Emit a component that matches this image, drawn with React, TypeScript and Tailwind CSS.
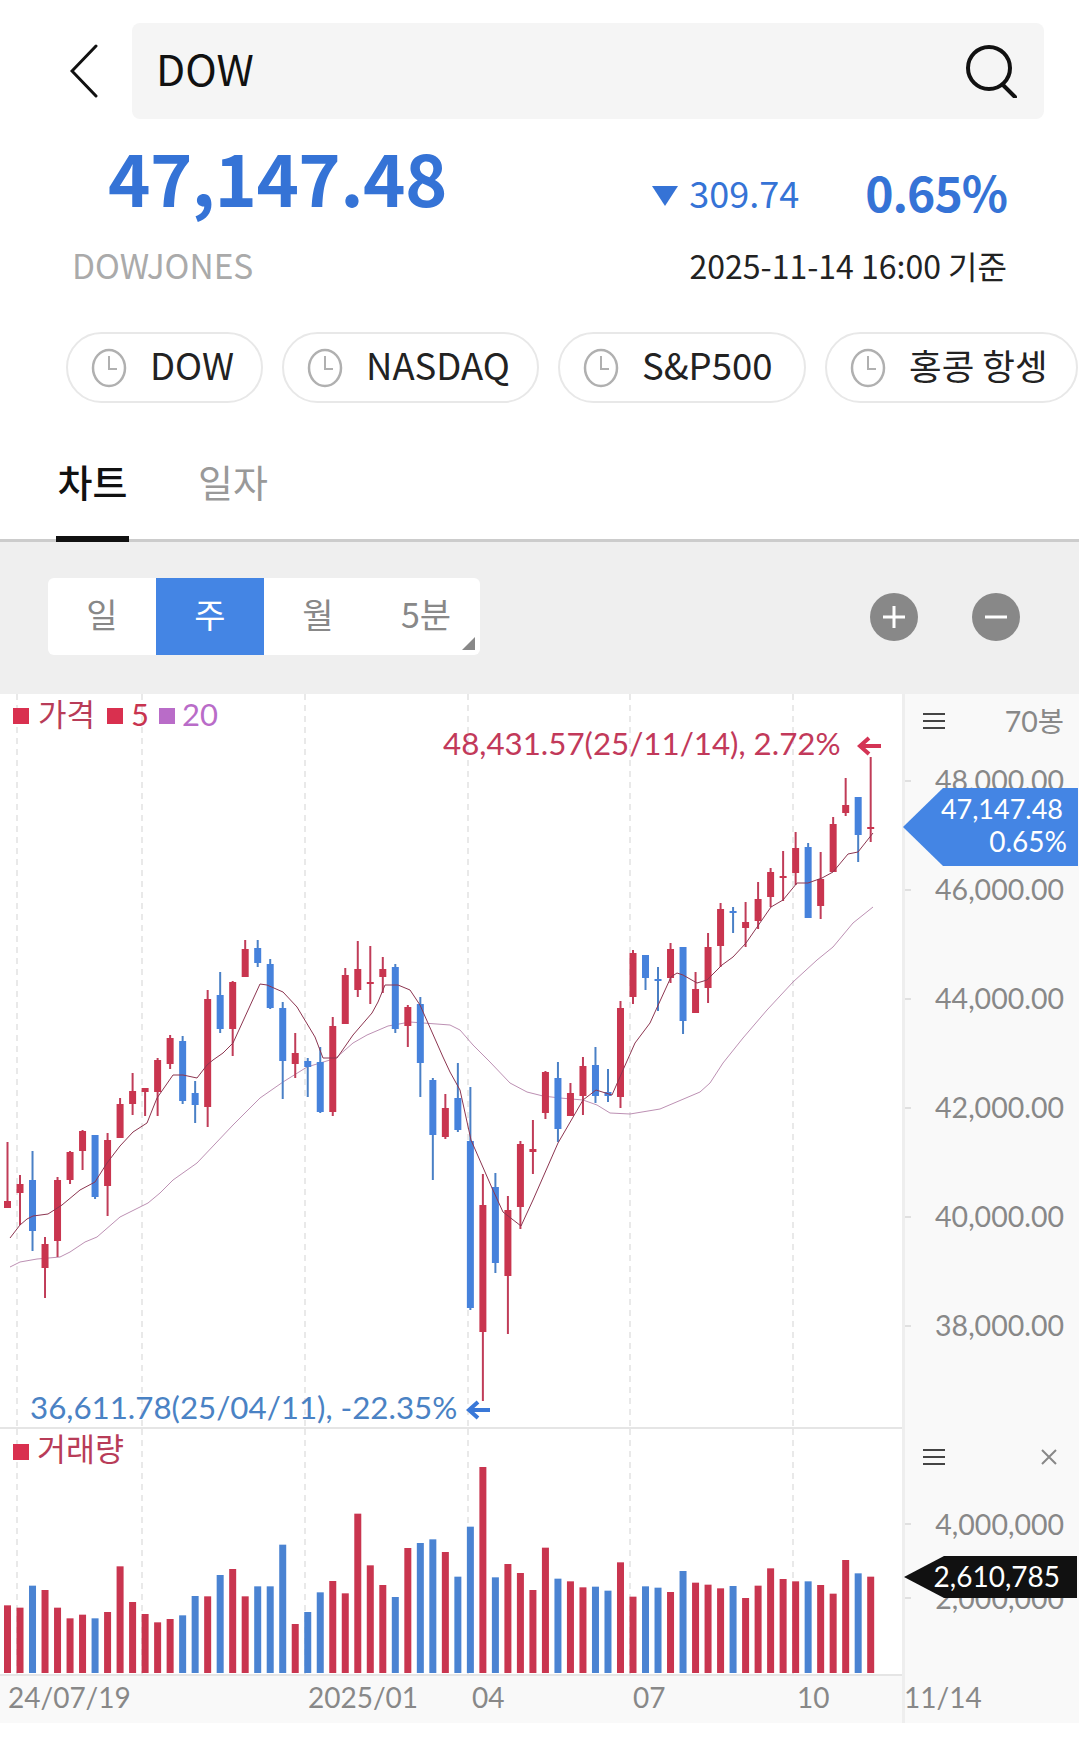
import React from 'react';

type Candle = [string, number, number, number, number];

// color, high, body top, body bottom, low (page coordinates)
const candles: Candle[] = [
  ['r', 1142, 1201, 1208, 1208], ['r', 1175, 1184, 1193, 1225], ['b', 1151, 1180, 1231, 1251], ['r', 1237, 1244, 1268, 1298],
  ['r', 1177, 1180, 1241, 1257], ['r', 1151, 1152, 1180, 1184], ['r', 1130, 1131, 1151, 1170], ['b', 1135, 1135, 1197, 1199],
  ['r', 1133, 1140, 1186, 1216], ['r', 1098, 1104, 1138, 1138], ['r', 1073, 1091, 1104, 1115], ['r', 1088, 1088, 1092, 1116],
  ['r', 1058, 1060, 1092, 1116], ['r', 1035, 1038, 1064, 1069], ['b', 1036, 1041, 1101, 1104], ['b', 1081, 1093, 1105, 1123],
  ['r', 990, 999, 1107, 1127], ['b', 972, 995, 1029, 1033], ['r', 981, 982, 1029, 1056], ['r', 940, 949, 977, 977],
  ['b', 940, 948, 963, 967], ['b', 959, 964, 1008, 1009], ['b', 1002, 1008, 1061, 1099], ['r', 1033, 1053, 1064, 1078],
  ['b', 1058, 1061, 1067, 1097], ['b', 1047, 1062, 1112, 1113], ['r', 1017, 1026, 1112, 1116], ['r', 968, 975, 1024, 1024],
  ['r', 941, 969, 990, 997], ['r', 946, 982, 984, 1004], ['r', 957, 969, 977, 993], ['b', 964, 967, 1029, 1033],
  ['r', 1005, 1007, 1026, 1047], ['b', 997, 1004, 1063, 1097], ['b', 1078, 1080, 1135, 1180], ['r', 1094, 1108, 1137, 1139],
  ['b', 1063, 1098, 1130, 1132], ['b', 1087, 1141, 1308, 1310], ['r', 1174, 1205, 1332, 1401], ['b', 1173, 1187, 1263, 1273],
  ['r', 1196, 1210, 1276, 1334], ['r', 1141, 1144, 1207, 1229], ['r', 1120, 1149, 1152, 1174], ['r', 1071, 1072, 1113, 1119],
  ['b', 1062, 1078, 1129, 1142], ['r', 1083, 1093, 1116, 1116], ['r', 1057, 1066, 1096, 1115], ['b', 1047, 1065, 1096, 1103],
  ['b', 1069, 1092, 1096, 1102], ['r', 1001, 1008, 1097, 1108], ['r', 950, 953, 997, 1004], ['b', 955, 955, 978, 990],
  ['b', 967, 979, 981, 1011], ['r', 943, 949, 978, 983], ['b', 947, 947, 1021, 1034], ['r', 972, 989, 1013, 1013],
  ['r', 933, 947, 988, 1003], ['r', 903, 909, 946, 967], ['b', 907, 911, 913, 933], ['r', 902, 922, 928, 947],
  ['r', 882, 899, 921, 929], ['r', 868, 872, 897, 907], ['r', 851, 876, 878, 901], ['r', 832, 848, 873, 885],
  ['b', 843, 847, 918, 918], ['r', 852, 879, 906, 919], ['r', 817, 824, 872, 872], ['r', 778, 805, 813, 816],
  ['b', 797, 797, 835, 862], ['r', 757, 827, 829, 842],
];

const ma5 =
  '10,1238 20,1225 27,1219 33,1216 48,1214 62,1205 80,1190 95,1182 107,1163 120,1146 133,1132 147,1123 157,1098 173,1075 183,1075 197,1078 207,1065 213,1060 223,1053 233,1043 260,984 267,985 283,992 297,1007 315,1037 323,1058 337,1058 353,1035 372,1013 378,1002 385,985 398,985 410,990 420,1005 443,1057 450,1072 460,1090 471,1140 492,1188 503,1212 521,1226 533,1200 558,1143 583,1100 596,1090 612,1095 623,1070 635,1043 650,1023 671,977 677,973 683,975 697,983 707,980 722,965 733,957 746,943 771,907 783,900 797,883 808,883 822,878 833,872 848,854 858,852 873,833';
const ma20 =
  '10,1267 20,1262 37,1259 60,1257 70,1252 85,1242 97,1237 120,1217 148,1203 160,1193 173,1180 197,1163 233,1125 260,1098 283,1082 307,1067 330,1060 337,1057 353,1043 367,1035 388,1026 410,1022 450,1025 460,1030 473,1045 490,1062 510,1083 527,1092 543,1096 560,1098 583,1100 597,1105 610,1113 630,1114 660,1109 700,1092 710,1083 723,1063 743,1038 767,1010 793,982 817,960 833,947 853,923 873,907';

const volumeTops = [
  553, 560, 494, 507, 560, 592, 581, 592, 573, 436, 543, 579, 604, 594, 583, 525, 526, 462, 444, 526, 496, 496, 371, 609, 573, 514, 480, 517, 278, 433, 492, 528, 381, 366, 355, 393, 467, 317, 138, 469, 429, 456, 507,
  380, 473, 481, 499, 497, 509, 424, 527, 496, 500, 513, 450, 485, 491, 502, 495, 531, 494, 442, 474, 481, 481, 492, 518, 417, 457, 467,
];
const volumeBlue = new Set([2, 7, 14, 15, 17, 20, 21, 22, 24, 25, 31, 33, 34, 36, 37, 39, 44, 47, 48, 51, 52, 54, 58, 64, 68]);

const gridX = [17, 142, 305, 468, 630, 793];
const RED = '#c9354f';
const BLUE = '#4682dc';
const candleX = (i: number) => 7.5 + 12.51 * i;

const ClockIcon = () => (
  <svg width="36" height="40" viewBox="0 0 36 40" fill="none" stroke="#b0b0b0" strokeWidth="2.5">
    <ellipse cx="18" cy="20" rx="16" ry="18" />
    <path d="M18 8v13h8" strokeWidth="2" />
  </svg>
);

const MenuIcon = () => (
  <svg width="22" height="16" viewBox="0 0 22 16" stroke="#444" strokeWidth="2">
    <path d="M0 1h22M0 8h22M0 15h22" />
  </svg>
);

const Arrow = ({ color }: { color: string }) => (
  <svg width="24" height="20" viewBox="0 0 24 20" fill="none" stroke={color} strokeWidth="4">
    <path d="M24 10H4M12 2l-9 8 9 8" />
  </svg>
);

const chips = [
  { label: 'DOW', width: 'w-[197px]', size: 'text-[36.5px]' },
  { label: 'NASDAQ', width: 'w-[257px]', size: 'text-[36.5px]' },
  { label: 'S&P500', width: 'w-[248px]', size: 'text-[36.5px]' },
  { label: '홍콩 항셍', width: 'w-[253px]', size: 'text-[35.5px]' },
];

const PriceChart = () => (
  <svg width="902" height="733" viewBox="0 694 902 733" className="block">
    {gridX.map((x) => (
      <line key={x} x1={x} x2={x} y1="694" y2="1427" stroke="#e9e9e9" strokeWidth="2" strokeDasharray="6 5" />
    ))}
    <polyline points={ma20} fill="none" stroke="#ab739f" strokeWidth="0.8" />
    {candles.map(([c, high, top, bottom, low], i) => {
      const x = candleX(i);
      const color = c === 'r' ? RED : BLUE;
      return (
        <g key={i}>
          <line x1={x} x2={x} y1={high} y2={low} stroke={c === 'r' ? '#c03c58' : '#4a80c6'} strokeWidth="2" />
          <rect x={x - 3.5} y={top} width="7" height={bottom - top} fill={color} />
        </g>
      );
    })}
    <polyline points={ma5} fill="none" stroke="#8c3550" strokeWidth="1" />
  </svg>
);

const VolumeChart = () => (
  <svg width="902" height="245" viewBox="0 1428 902 245" className="block">
    {gridX.map((x) => (
      <line key={x} x1={x} x2={x} y1="1428" y2="1673" stroke="#e9e9e9" strokeWidth="2" strokeDasharray="6 5" />
    ))}
    {volumeTops.map((t, i) => {
      const y = 1420 + t / 3;
      return <rect key={i} x={candleX(i) - 3.5} y={y} width="7" height={1672 - y} fill={volumeBlue.has(i) ? '#4a83d2' : RED} />;
    })}
  </svg>
);

const App = () => {
  return (
    <div className="w-[1079px] h-[1751px] overflow-hidden bg-white font-['Noto_Sans_CJK_KR',sans-serif]">
      {/* Search */}
      <div className="flex items-center pt-[23px] pl-[70px] pr-[35px]">
        <svg width="28" height="54" viewBox="0 0 28 54" fill="none" stroke="#111" strokeWidth="3" strokeLinecap="round" className="mr-[34px]">
          <path d="M26 2L2 27l24 25" />
        </svg>
        <div className="flex-1 h-[96px] bg-[#f5f5f5] rounded-lg flex items-center justify-between pl-[24px] pr-[27px]">
          <span className="text-[42.5px] leading-none text-[#111] mb-[6px]">DOW</span>
          <svg width="52" height="54" viewBox="0 0 52 54" fill="none" stroke="#111" strokeWidth="4" strokeLinecap="round">
            <circle cx="24" cy="24" r="21" />
            <path d="M38 41l12 12" />
          </svg>
        </div>
      </div>

      {/* Quote */}
      <div className="flex items-end h-[96px] pl-[108px] pr-[72px]">
        <span className="text-[72px] leading-none font-bold tracking-[-0.6px] text-[#3573d6] mb-[3px]">47,147.48</span>
        <svg width="26" height="20" viewBox="0 0 26 20" className="ml-auto mb-[9px] mr-[11px]">
          <path d="M0 0h26L13 20z" fill="#3573d6" />
        </svg>
        <span className="text-[36px] leading-none text-[#3573d6] mb-[5px] mr-[66px]">309.74</span>
        <span className="text-[48px] leading-none font-bold tracking-[-1px] text-[#3573d6]">0.65%</span>
      </div>
      <div className="flex items-center justify-between h-[60px] pl-[72px] pr-[72px] mt-[20px]">
        <span className="text-[33.5px] leading-none text-[#aaaaaa]">DOWJONES</span>
        <span className="text-[32px] leading-none text-[#222222]">2025-11-14 16:00 기준</span>
      </div>

      {/* Chips */}
      <div className="flex gap-[19px] pl-[66px] mt-[37px] w-[1200px]">
        {chips.map((chip) => (
          <div key={chip.label} className={`${chip.width} h-[71px] shrink-0 rounded-full border-2 border-[#e8e8e8] flex items-center pl-[23px] gap-[23px]`}>
            <ClockIcon />
            <span className={`${chip.size} leading-none text-[#222222] whitespace-nowrap mb-[5px]`}>{chip.label}</span>
          </div>
        ))}
      </div>

      {/* Tabs */}
      <div className="flex h-[139px] border-b-[3px] border-[#cccccc] pl-[56px] gap-[69px]">
        <div className="w-[73px] h-[139px] border-b-[6px] border-[#111111] flex justify-center pt-[59px]">
          <span className="text-[38px] leading-none font-medium text-[#111]">차트</span>
        </div>
        <div className="pt-[59px]">
          <span className="text-[38px] leading-none text-[#999999]">일자</span>
        </div>
      </div>

      {/* Period toolbar */}
      <div className="flex items-center justify-between h-[152px] bg-[#efefef] pl-[48px] pr-[59px] pb-[3px]">
        <div className="relative flex w-[432px] h-[77px] bg-white rounded-md overflow-hidden leading-none">
          <div className="w-[108px] flex items-center justify-center text-[34px] text-[#888888] pb-[5px]">일</div>
          <div className="w-[108px] flex items-center justify-center text-[34px] text-white bg-[#4485e4] pb-[5px]">주</div>
          <div className="w-[108px] flex items-center justify-center text-[34px] text-[#888888] pb-[5px]">월</div>
          <div className="w-[108px] flex items-center justify-center text-[34px] text-[#888888] pb-[5px]">5분</div>
          <div className="absolute right-[5px] bottom-[5px] w-[13px] h-[13px] bg-[#888888] [clip-path:polygon(100%_0,100%_100%,0_100%)]"></div>
        </div>
        <div className="flex gap-[54px]">
          <div className="w-[48px] h-[48px] rounded-full bg-[#888888] flex items-center justify-center">
            <svg width="24" height="24" viewBox="0 0 24 24" stroke="#fff" strokeWidth="3"><path d="M12 1v22M1 12h22" /></svg>
          </div>
          <div className="w-[48px] h-[48px] rounded-full bg-[#888888] flex items-center justify-center">
            <svg width="24" height="24" viewBox="0 0 24 24" stroke="#fff" strokeWidth="3"><path d="M1 12h22" /></svg>
          </div>
        </div>
      </div>

      {/* Charts */}
      <div className="flex font-['Lato','Noto_Sans_CJK_KR',sans-serif]">
        <div className="w-[902px] shrink-0">
          <div className="relative h-[733px]">
            <PriceChart />
            <div className="absolute left-[13px] top-[5px] flex items-center text-[31px] leading-none">
              <span className="w-[16px] h-[16px] bg-[#d9304f] mr-[9px] mt-[3px]"></span>
              <span className="text-[#b83c58] mr-[12px]">가격</span>
              <span className="w-[16px] h-[16px] bg-[#d9304f] mr-[8px] mt-[3px]"></span>
              <span className="text-[#c8344f] mr-[10px]">5</span>
              <span className="w-[16px] h-[16px] bg-[#b96cc8] mr-[7px] mt-[3px]"></span>
              <span className="text-[#b96cc8]">20</span>
            </div>
            <div className="absolute left-[443px] top-[34px] flex items-center text-[31.3px] leading-none text-[#c2395a] whitespace-nowrap">
              <span>48,431.57(25/11/14), 2.72%</span>
              <span className="ml-[16px] mt-[4px]"><Arrow color="#d43455" /></span>
            </div>
            <div className="absolute left-[30px] top-[698px] flex items-center text-[31.3px] leading-none text-[#4a82c4] whitespace-nowrap">
              <span>36,611.78(25/04/11), -22.35%</span>
              <span className="ml-[9px] mt-[4px]"><Arrow color="#3a78d8" /></span>
            </div>
          </div>

          <div className="border-t-2 border-[#e5e5e5]">
            <div className="relative h-[245px]">
              <VolumeChart />
              <div className="absolute left-[13px] top-[5px] flex items-center text-[31.5px] leading-none text-[#b83c58]">
                <span className="w-[16px] h-[16px] bg-[#d9304f] mr-[8px] mt-[5px]"></span>
                <span>거래량</span>
              </div>
            </div>
          </div>

          <div className="relative h-[49px] bg-[#f9f9f9] border-t-2 border-[#e5e5e5] text-[28px] leading-none text-[#888888]">
            <span className="absolute left-[8px] top-[7px]">24/07/19</span>
            <span className="absolute left-[308px] top-[7px]">2025/01</span>
            <span className="absolute left-[472px] top-[7px]">04</span>
            <span className="absolute left-[633px] top-[7px]">07</span>
            <span className="absolute left-[797px] top-[7px]">10</span>
          </div>
        </div>

        {/* Axis */}
        <div className="flex-1 bg-[#f9f9f9] border-l-[3px] border-[#eeeeee] text-[28.5px] leading-none text-[#888888]">
          <div className="relative h-[733px]">
            <div className="flex items-center justify-between h-[54px] pl-[18px] pr-[15px] mb-[-22px]">
              <MenuIcon />
              <span>70봉</span>
            </div>
            {['48,000.00', '46,000.00', '44,000.00', '42,000.00', '40,000.00', '38,000.00'].map((label) => (
              <div key={label} className="flex items-center justify-between h-[109px] pr-[15px]">
                <span className="w-[6px] h-[2px] bg-[#e0e0e0]"></span>
                <span>{label}</span>
              </div>
            ))}
            <div className="absolute left-[-2px] top-[94px] w-[175px] h-[78px] bg-[#4485e4] text-white text-[27px] flex flex-col items-end justify-center gap-[4px] pr-[11px] pb-[4px] [clip-path:polygon(0_50%,40px_0,100%_0,100%_100%,40px_100%)]">
              <span className="mr-[4px] leading-[28px]">47,147.48</span>
              <span className="leading-[28px] text-[28px]">0.65%</span>
            </div>
          </div>
          <div className="border-t-2 border-transparent">
            <div className="relative h-[245px]">
              <div className="flex items-center justify-between h-[56px] pl-[18px] pr-[22px]">
                <MenuIcon />
                <svg width="16" height="16" viewBox="0 0 16 16" stroke="#888" strokeWidth="2"><path d="M1 1l14 14M15 1L1 15" /></svg>
              </div>
              <div className="mt-[2px]">
                {['4,000,000', '2,000,000'].map((label) => (
                  <div key={label} className="flex items-center justify-between h-[74px] pr-[15px]">
                    <span className="w-[6px] h-[2px] bg-[#e0e0e0]"></span>
                    <span>{label}</span>
                  </div>
                ))}
              </div>
              <div className="absolute left-[-1px] top-[127px] w-[173px] h-[42px] bg-[#111111] text-white text-[28px] flex items-center justify-end pr-[17px] pb-[3px] [clip-path:polygon(0_50%,40px_0,100%_0,100%_100%,40px_100%)]">
                2,610,785
              </div>
            </div>
          </div>
          <div className="h-[49px] text-[28px] pt-[9px] ml-[-1px]">11/14</div>
        </div>
      </div>
    </div>
  );
};

export default App;
